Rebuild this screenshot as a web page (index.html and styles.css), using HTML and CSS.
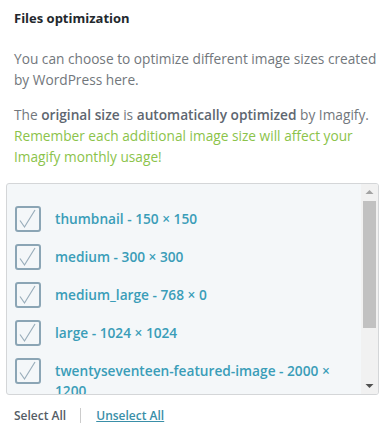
FILE: index.html
```html
<!DOCTYPE html>
<html lang="en">
<head>
  <meta charset="UTF-8">
  <title>Files optimization</title>
  <meta name="viewport" content="width=device-width, initial-scale=1">
  <link rel="stylesheet" href="styles.css">
</head>
<body>

<div class="panel">
  <h3 class="panel-title">Files optimization</h3>

  <p class="desc">You can choose to optimize different image sizes created by WordPress here.</p>

  <p class="desc">The <strong>original size</strong> is <strong>automatically optimized</strong> by Imagify.
    <span class="warn">Remember each additional image size will affect your Imagify monthly usage!</span></p>

  <div class="sizes-box">
    <div class="sizes-list">
      <label class="size-item">
        <span class="check"><svg viewBox="0 0 26 26"><path d="M5 14.5l4.5 6.5 10.5-17"/></svg></span>
        <span class="size-label">thumbnail - 150 × 150</span>
      </label>
      <label class="size-item">
        <span class="check"><svg viewBox="0 0 26 26"><path d="M5 14.5l4.5 6.5 10.5-17"/></svg></span>
        <span class="size-label">medium - 300 × 300</span>
      </label>
      <label class="size-item">
        <span class="check"><svg viewBox="0 0 26 26"><path d="M5 14.5l4.5 6.5 10.5-17"/></svg></span>
        <span class="size-label">medium_large - 768 × 0</span>
      </label>
      <label class="size-item">
        <span class="check"><svg viewBox="0 0 26 26"><path d="M5 14.5l4.5 6.5 10.5-17"/></svg></span>
        <span class="size-label">large - 1024 × 1024</span>
      </label>
      <label class="size-item">
        <span class="check"><svg viewBox="0 0 26 26"><path d="M5 14.5l4.5 6.5 10.5-17"/></svg></span>
        <span class="size-label">twentyseventeen-featured-image - 2000 × 1200</span>
      </label>
    </div>

    <!-- fake scrollbar -->
    <div class="scrollbar">
      <span class="sb-btn"><svg viewBox="0 0 17 17"><path d="M4.5 10h8l-4-4z"/></svg></span>
      <span class="sb-thumb"></span>
      <span class="sb-track"></span>
      <span class="sb-btn"><svg viewBox="0 0 17 17"><path d="M4.5 7h8l-4 4z"/></svg></span>
    </div>
  </div>

  <div class="actions">
    <a href="#" class="action">Select All</a>
    <span class="sep"></span>
    <a href="#" class="action action-link">Unselect All</a>
  </div>
</div>

</body>
</html>
```

FILE: styles.css
```css
body {
  margin: 0;
  font-family: "Open Sans", Arial, sans-serif;
  background-color: #fff;
  color: #72777c;
}

.panel {
  padding: 0 9px 0 6px;
}

.panel-title {
  margin: 0;
  padding: 9px 0 0 8px;
  font-size: 13px;
  line-height: 18px;
  font-weight: 700;
  color: #23282d;
}

.desc {
  margin: 21px 0 0;
  padding-left: 8px;
  font-size: 13.7px;
  line-height: 21px;
}

.desc + .desc {
  margin-top: 14px;
}

.desc strong {
  font-weight: 600;
  color: #5e6670;
}

.warn {
  color: #8bc34a;
}

.sizes-box {
  display: flex;
  margin-top: 16px;
  height: 210px;
  border: 1px solid #d4d6d8;
  border-radius: 3px;
  background-color: #f4f7f9;
  overflow: hidden;
}

.sizes-list {
  flex: 1;
  padding: 22px 24px 0 8px;
  overflow: hidden;
}

.size-item {
  display: flex;
  align-items: flex-start;
  gap: 14px;
  margin-bottom: 12px;
}

.check {
  flex: none;
  width: 22px;
  height: 22px;
  border: 2px solid #8ba5b5;
  border-radius: 3px;
}

.check svg {
  display: block;
  margin: -2px 0 0 -2px;
  width: 26px;
  height: 26px;
  fill: none;
  stroke: #9aaebb;
  stroke-width: 1.2;
}

.size-label {
  padding-top: 3px;
  font-size: 13.7px;
  line-height: 20px;
  font-weight: 600;
  color: #3a9db8;
}

.scrollbar {
  flex: none;
  width: 17px;
  display: flex;
  flex-direction: column;
  background-color: #f1f1f1;
}

.sb-btn {
  height: 17px;
}

.sb-btn svg {
  display: block;
  width: 17px;
  height: 17px;
  fill: #a3a3a3;
}

.sb-btn:last-child svg {
  fill: #505050;
}

.sb-thumb {
  height: 127px;
  margin: 0 2px;
  background-color: #c1c1c1;
}

.sb-track {
  flex: 1;
}

.actions {
  display: flex;
  align-items: center;
  padding: 12px 0 0 8px;
}

.action {
  font-size: 12px;
  line-height: 17px;
  font-weight: 600;
  color: #555d66;
  text-decoration: none;
}

.action-link {
  color: #3a8fa8;
  text-decoration: underline;
}

.sep {
  width: 1px;
  height: 15px;
  margin: 0 15px 0 14px;
  background-color: #ccc;
}
```
